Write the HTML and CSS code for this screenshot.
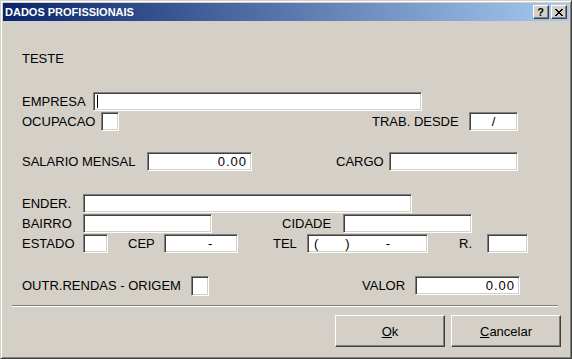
FILE: index.html
```html
<!DOCTYPE html>
<html lang="pt">
<head>
<meta charset="utf-8">
<title>DADOS PROFISSIONAIS</title>
<link rel="stylesheet" href="styles.css">
</head>
<body>
<div class="window">
  <div class="titlebar">
    <span class="title">DADOS PROFISSIONAIS</span>
    <div class="caption-buttons">
      <span class="cbtn cbtn-help">?</span>
      <span class="cbtn cbtn-close">
        <svg width="8" height="7" viewBox="0 0 8 7" shape-rendering="crispEdges">
          <g fill="#000">
            <rect x="0" y="0" width="2" height="1"/><rect x="6" y="0" width="2" height="1"/>
            <rect x="1" y="1" width="2" height="1"/><rect x="5" y="1" width="2" height="1"/>
            <rect x="2" y="2" width="4" height="1"/>
            <rect x="3" y="3" width="2" height="1"/>
            <rect x="2" y="4" width="4" height="1"/>
            <rect x="1" y="5" width="2" height="1"/><rect x="5" y="5" width="2" height="1"/>
            <rect x="0" y="6" width="2" height="1"/><rect x="6" y="6" width="2" height="1"/>
          </g>
        </svg>
      </span>
    </div>
  </div>
  <div class="content">
    <div class="form">
      <div class="heading">TESTE</div>

      <div class="row row-empresa">
        <span class="label w-empresa">EMPRESA</span>
        <span class="field f-empresa"><span class="caret"></span></span>
      </div>
      <div class="row row-tight">
        <span class="label w-ocupacao">OCUPACAO</span>
        <span class="field f-ocupacao"></span>
        <span class="label w-trab">TRAB. DESDE</span>
        <span class="field f-trab center">/</span>
      </div>

      <div class="row row-salario">
        <span class="label w-salario">SALARIO MENSAL</span>
        <span class="field f-salario num">0.00</span>
        <span class="label w-cargo">CARGO</span>
        <span class="field f-cargo"></span>
      </div>

      <div class="row row-ender">
        <span class="label w-ender">ENDER.</span>
        <span class="field f-ender"></span>
      </div>
      <div class="row row-tight">
        <span class="label w-ender">BAIRRO</span>
        <span class="field f-bairro"></span>
        <span class="label w-cidade">CIDADE</span>
        <span class="field f-cidade"></span>
      </div>
      <div class="row row-tight">
        <span class="label w-ender">ESTADO</span>
        <span class="field f-estado"></span>
        <span class="label w-cep">CEP</span>
        <span class="field f-cep"><span class="cep-dash">-</span></span>
        <span class="label w-tel">TEL</span>
        <span class="field f-tel"><span class="tel-a">(</span><span class="tel-b">)</span><span class="tel-c">-</span></span>
        <span class="label w-r">R.</span>
        <span class="field f-r"></span>
      </div>

      <div class="row row-outr">
        <span class="label w-outr">OUTR.RENDAS - ORIGEM</span>
        <span class="field f-outr"></span>
        <span class="label w-valor">VALOR</span>
        <span class="field f-valor num">0.00</span>
      </div>
    </div>

    <div class="separator"></div>

    <div class="actions">
      <button class="btn" type="button"><u>O</u>k</button>
      <button class="btn" type="button"><u>C</u>ancelar</button>
    </div>
  </div>
</div>
</body>
</html>
```

FILE: styles.css
```css
* { box-sizing: border-box; }

html, body {
  margin: 0;
  padding: 0;
  background: #d4d0c8;
}

body {
  font-family: "Liberation Sans", Arial, sans-serif;
  font-size: 13px;
  color: #000;
}

.window {
  width: 572px;
  height: 359px;
  background: #d4d0c8;
  border: 1px solid;
  border-color: #d4d0c8 #404040 #404040 #d4d0c8;
  box-shadow: inset 1px 1px 0 #ffffff, inset -1px -1px 0 #808080;
  padding: 2px;
  display: flex;
  flex-direction: column;
}

/* ---------- title bar ---------- */
.titlebar {
  height: 18px;
  flex: none;
  display: flex;
  align-items: center;
  justify-content: space-between;
  background: linear-gradient(to right, #0a246a, #a6caf0);
  padding: 0 2px 0 2px;
}

.title {
  color: #fff;
  font-weight: bold;
  font-size: 11px;
  line-height: 18px;
  letter-spacing: 0;
  white-space: nowrap;
}

.caption-buttons {
  display: flex;
  gap: 2px;
}

.cbtn {
  width: 16px;
  height: 14px;
  background: #d4d0c8;
  border: 1px solid;
  border-color: #ffffff #404040 #404040 #ffffff;
  box-shadow: inset -1px -1px 0 #808080;
  display: flex;
  align-items: center;
  justify-content: center;
}

.cbtn-help {
  font-weight: bold;
  font-size: 11px;
  line-height: 12px;
  padding-right: 1px;
}

.cbtn-close svg {
  display: block;
  margin-right: 1px;
}

/* ---------- form ---------- */
.content {
  flex: 1;
  display: flex;
  flex-direction: column;
}

.form {
  padding-left: 19px;
}

.heading {
  margin-top: 28px;
  height: 19px;
  line-height: 19px;
}

.row {
  display: flex;
  align-items: center;
  height: 19px;
}

.row-empresa { margin-top: 24px; }
.row-tight   { margin-top: 1px; }
.row-salario { margin-top: 21px; }
.row-ender   { margin-top: 23px; }
.row-outr    { margin-top: 23px; }

.label {
  flex: none;
  white-space: nowrap;
  line-height: 19px;
}

.field {
  flex: none;
  height: 19px;
  background: #fff;
  border: 1px solid;
  border-color: #808080 #ffffff #ffffff #808080;
  box-shadow: inset 1px 1px 0 #404040, inset -1px -1px 0 #d4d0c8;
  line-height: 17px;
  padding: 0 2px;
  display: flex;
  align-items: center;
  white-space: nowrap;
}

.field.num {
  justify-content: flex-end;
  padding-right: 4px;
  letter-spacing: 1px;
}

.field.center { justify-content: center; }

.caret {
  width: 1px;
  height: 13px;
  background: #000;
  margin-left: 1px;
}

/* label widths (place next field) */
.w-empresa { width: 71px; }
.w-ocupacao { width: 79px; }
.w-trab    { width: 97px; margin-left: 253px; }
.w-salario { width: 125px; }
.w-cargo   { width: 53px; margin-left: 84px; }
.w-ender   { width: 61px; }
.w-cidade  { width: 61px; margin-left: 70px; }
.w-cep     { width: 36px; margin-left: 20px; }
.w-tel     { width: 34px; margin-left: 35px; }
.w-r       { width: 28px; margin-left: 31px; }
.w-outr    { width: 169px; }
.w-valor   { width: 53px; margin-left: 153px; }

/* field widths */
.f-empresa { width: 329px; }
.f-ocupacao { width: 18px; }
.f-trab    { width: 49px; }
.f-salario { width: 105px; }
.f-cargo   { width: 129px; }
.f-ender   { width: 329px; }
.f-bairro  { width: 129px; }
.f-cidade  { width: 129px; }
.f-estado  { width: 25px; }
.f-cep     { width: 74px; }
.f-tel     { width: 121px; }
.f-r       { width: 41px; }
.f-outr    { width: 18px; height: 20px; }
.f-valor   { width: 105px; }

.cep-dash { margin-left: 41px; }
.tel-a { margin-left: 4px; }
.tel-b { margin-left: 27px; }
.tel-c { margin-left: 36px; }

/* ---------- bottom ---------- */
.separator {
  margin: 10px 0 0 9px;
  width: 546px;
  height: 2px;
  border-top: 1px solid #808080;
  border-bottom: 1px solid #ffffff;
}

.actions {
  margin-top: 8px;
  display: flex;
  justify-content: flex-end;
  gap: 6px;
  padding-right: 8px;
}

.btn {
  width: 110px;
  height: 32px;
  margin: 0;
  padding: 0;
  font-family: "Liberation Sans", Arial, sans-serif;
  font-size: 13px;
  color: #000;
  background: #d4d0c8;
  border: 1px solid;
  border-color: #ffffff #404040 #404040 #ffffff;
  box-shadow: inset -1px -1px 0 #808080;
  border-radius: 0;
}
```
